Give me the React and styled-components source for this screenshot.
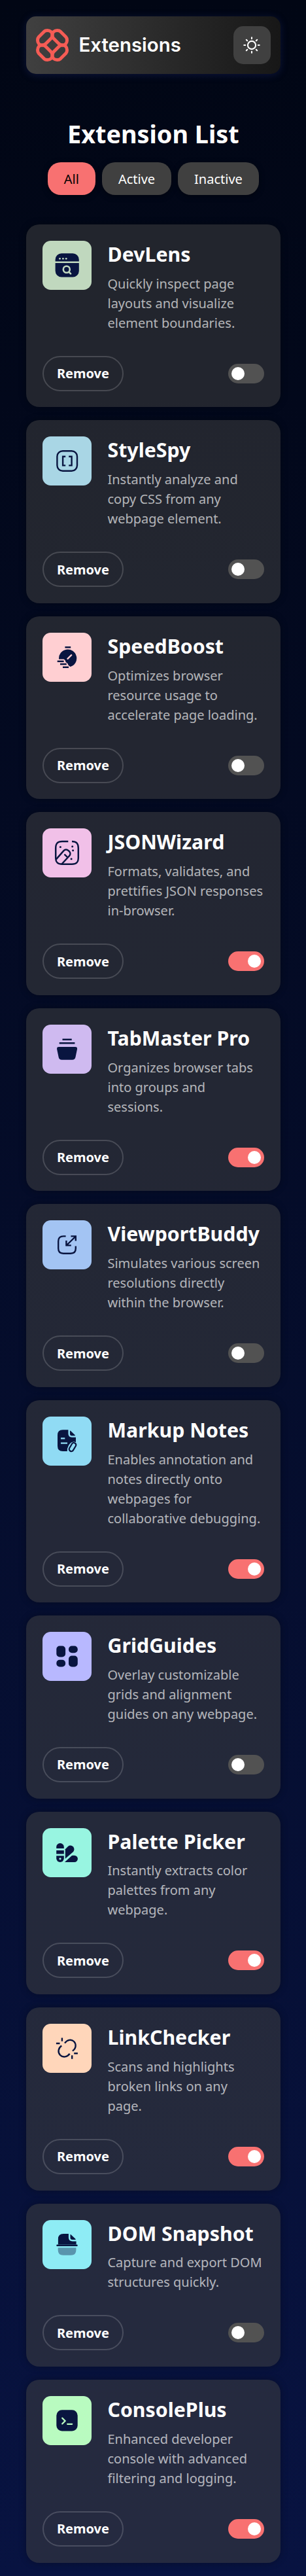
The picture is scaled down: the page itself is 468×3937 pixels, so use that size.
import React, { useState } from 'react';
import styled, { createGlobalStyle } from 'styled-components';

const NAVY = '#091540';

const GlobalStyle = createGlobalStyle`
  *, *::before, *::after { box-sizing: border-box; }
  body {
    margin: 0;
    background: linear-gradient(180deg, #010614 0%, #081341 100%);
    color: #fff;
    font-family: 'Noto Sans', sans-serif;
    font-size: 20px;
  }
  h1, h2, p { margin: 0; }
  button { font: inherit; color: inherit; cursor: pointer; }
  svg { display: block; }
`;

const Page = styled.div`
  width: 388.9px;
  margin: 0 0 0 39.9px;
  padding: 25px 0 20px;
`;

const Header = styled.header`
  display: flex;
  align-items: center;
  justify-content: space-between;
  height: 88px;
  padding: 15px;
  border-radius: 15px;
  background: linear-gradient(90deg, #404040, #171717);
  box-shadow: 0 2px 12px rgba(30, 40, 110, 0.4);
`;

const Brand = styled.div`
  display: flex;
  align-items: center;
  gap: 15.6px;
`;

const Wordmark = styled.span`
  font-family: Inter, sans-serif;
  font-size: 29.4px;
  font-weight: 600;
  line-height: 36px;
`;

const ThemeButton = styled.button`
  display: grid;
  place-items: center;
  width: 57px;
  height: 58px;
  padding: 0;
  border: 0;
  border-radius: 15px;
  background: #404040;
`;

const Toolbar = styled.section`
  display: flex;
  flex-direction: column;
  align-items: center;
  gap: 17px;
  margin: 66px 0 45px;
`;

const Title = styled.h1`
  font-size: 37.8px;
  line-height: 52px;
  font-weight: 700;
`;

const Filters = styled.div`
  display: flex;
  gap: 10px;
`;

const FilterButton = styled.button`
  height: 50px;
  padding: 0 25px;
  border: 0;
  border-radius: 20px;
  background: ${(p) => (p.$selected ? '#f87171' : '#404040')};
  color: ${(p) => (p.$selected ? '#000' : '#fff')};
  box-shadow: 0 2px 10px rgba(0, 0, 0, 0.4);
`;

const List = styled.main`
  display: flex;
  flex-direction: column;
  gap: 20px;
`;

const Card = styled.article`
  display: flex;
  flex-direction: column;
  gap: 35px;
  padding: 25px 25px 24.9px;
  border-radius: 20px;
  background: rgba(64, 64, 64, 0.53);
  box-shadow: 0 0 12px rgba(0, 0, 0, 0.3);
`;

const CardBody = styled.div`
  display: flex;
  align-items: flex-start;
  gap: 24.6px;
`;

const IconTile = styled.div`
  flex: none;
  width: 75px;
  height: 75px;
  border-radius: 12.5px;
  background: ${(p) => p.$color};
`;

const CardText = styled.div`
  flex: 1;
  min-width: 0;
`;

const CardTitle = styled.h2`
  font-size: 30.3px;
  line-height: 41px;
  font-weight: 700;
  white-space: nowrap;
`;

const Description = styled.p`
  margin-top: 9.6px;
  line-height: 30px;
  color: rgba(255, 255, 255, 0.67);
`;

const CardFooter = styled.div`
  display: flex;
  align-items: center;
  justify-content: space-between;
`;

const RemoveButton = styled.button`
  width: 124px;
  height: 54px;
  padding: 0;
  border: 2px solid rgba(255, 255, 255, 0.17);
  border-radius: 27px;
  background: transparent;
  font-weight: 700;
`;

const Switch = styled.button`
  display: flex;
  align-items: center;
  justify-content: ${(p) => (p.$on ? 'flex-end' : 'flex-start')};
  width: 55px;
  height: 30px;
  padding: 0 5px;
  border: 0;
  border-radius: 15px;
  background: ${(p) => (p.$on ? '#f87171' : '#525252')};
`;

const Knob = styled.span`
  width: 20px;
  height: 20px;
  border-radius: 50%;
  background: #fff;
`;

const PETAL =
  'M4.2 12.5L12.5 4.2C14 2.8 15.5 2.5 17.5 2.5C22 2.5 25 5.5 25 9.5C25 12 24.3 13.5 22.8 15L15 22.8C13.5 24.3 12 25 9.5 25C5.5 25 2.5 22 2.5 17.5C2.5 15.5 2.8 14 4.2 12.5Z';

const Logo = () => (
  <svg width="50" height="50" viewBox="0 0 50 50" fill="none" stroke="#f55c55" strokeWidth="5">
    {[0, 90, 180, 270].map((angle) => (
      <path key={angle} d={PETAL} transform={`rotate(${angle} 25 25)`} />
    ))}
  </svg>
);

const Sun = () => (
  <svg width="28" height="28" viewBox="-14 -14 28 28" fill="none" stroke="#fff" strokeWidth="2.1" strokeLinecap="round">
    <circle r="6.1" />
    {[0, 90, 180, 270].map((angle) => (
      <path key={angle} d="M0 -9.8V-11.7M6.8 -6.8L8.2 -8.2" transform={`rotate(${angle})`} />
    ))}
  </svg>
);

const glyphs = {
  lens: (bg) => (
    <>
      <rect x="19.6" y="19.3" width="36.2" height="36.2" rx="9.5" fill={NAVY} />
      <path d="M19 32.8H56.5" stroke={bg} strokeWidth="2.4" />
      <g fill={bg}>
        <circle cx="26.5" cy="27.3" r="1.4" />
        <circle cx="31.4" cy="27.3" r="1.4" />
        <circle cx="36.2" cy="27.3" r="1.4" />
      </g>
      <g fill="none" stroke={bg} strokeWidth="2.6" strokeLinecap="round">
        <circle cx="36.8" cy="43.8" r="5" />
        <path d="M40.8 48L43.1 50.3" />
      </g>
    </>
  ),
  brackets: () => (
    <g fill="none" stroke={NAVY} strokeWidth="2.4">
      <rect x="22.4" y="22.2" width="30.6" height="30.6" rx="8.5" />
      <path d="M35.2 30.8H31.1V44.4H35.2M40.2 30.8H44.6V44.4H40.2" />
    </g>
  ),
  stopwatch: (bg) => (
    <>
      <path d="M25.1 40.4A13.6 13.6 0 1 1 42.6 52.1C40.5 50.5 39.6 49.8 39 48.4C38.4 46.7 37.5 46 35.8 45.2C35 43 34.5 41 32.6 40.4Z" fill={NAVY} />
      <path d="M38.4 39.8L44.2 34.2" stroke={bg} strokeWidth="2.3" strokeLinecap="round" />
      <path d="M34.4 22.2H43.2M22.7 43.7H32.6M27 48.1H36.7M31 52.7H40" stroke={NAVY} strokeWidth="2.5" />
    </>
  ),
  wand: () => (
    <>
      <g fill="none" stroke={NAVY} strokeWidth="2.5">
        <path d="M39.3 19.9H30C23 19.9 20.2 23 20.2 30V44.8C20.2 52 23 54.8 30 54.8H45C52 54.8 54.8 52 54.8 44.8V30C54.8 23 52 19.9 45 19.9" />
        <path d="M20.8 47.4L32.5 34.2C34.4 32 37.4 31.9 39.4 33.8L40.9 35.2C42.8 37.1 42.9 40 41.1 42L29 55" />
        <path d="M34.2 40.4L37.4 43.4" strokeLinecap="round" />
      </g>
      <g fill={NAVY}>
        <circle cx="27.4" cy="28.4" r="1.5" />
        <circle cx="45.7" cy="27.7" r="1.5" />
        <circle cx="46.6" cy="33.7" r="1.5" />
        <circle cx="44.1" cy="46.7" r="1.5" />
      </g>
    </>
  ),
  tabs: () => (
    <>
      <path d="M30.5 22.7H44.7M25.7 28.2H49.4" stroke={NAVY} strokeWidth="2.4" />
      <path d="M25 34H50Q53.5 34 53 37.4L50.5 49.4Q49.5 53.7 45.5 53.7H29.5Q25.5 53.7 24.6 49.4L22.1 37.4Q21.6 34 25 34Z" fill={NAVY} />
    </>
  ),
  resize: () => (
    <path
      d="M35.6 24.4H32C26.5 24.4 24.2 26.7 24.2 32V43C24.2 48.5 26.5 50.7 32 50.7H43C48.5 50.7 50.8 48.5 50.8 43V39.6M37 38L50.3 25M43.4 24.4H50.8V31.6M36.4 31V38.4H43.8"
      fill="none"
      stroke={NAVY}
      strokeWidth="2.4"
    />
  ),
  notes: (bg) => (
    <>
      <path d="M39.4 20.3H31Q23 20.3 23 28.3V45Q23 53 31 53H37.8Q37.5 48.5 40 44Q43 38.8 47.5 38.4Q49.8 38.3 51 39.2V31.7H45Q39.4 31.7 39.4 26Z" fill={NAVY} />
      <path d="M42 21.4Q42.6 21.4 43.4 22.2L49.2 27.7Q50.2 28.7 50 29.3H44.6Q42 29.3 42 26.5Z" fill={NAVY} />
      <path d="M28 33.4H34.3M28 40.6H38" stroke={bg} strokeWidth="2.3" />
      <rect x="-3.3" y="-7" width="6.6" height="14" rx="3.1" transform="translate(46 46.6) rotate(31)" fill={bg} stroke={NAVY} strokeWidth="2.2" />
    </>
  ),
  grid: () => (
    <g fill={NAVY}>
      <rect x="21.3" y="21.6" width="13.8" height="16.8" rx="5" />
      <rect x="40" y="21.6" width="13.8" height="10.6" rx="5" />
      <rect x="21.3" y="42.8" width="13.8" height="10.6" rx="5" />
      <rect x="40" y="36.6" width="13.8" height="16.8" rx="5" />
    </g>
  ),
  palette: (bg) => (
    <>
      <rect x="21.2" y="23" width="11.6" height="29" rx="5.7" fill={NAVY} />
      <path d="M20.5 32.5H33.5M20.5 40.8H33.5" stroke={bg} strokeWidth="2.8" />
      <circle cx="27" cy="46.8" r="1.6" fill={bg} />
      <path d="M34.8 46.8V32.2L39 27.9A5.8 5.8 0 0 1 47.2 36Z" fill={NAVY} />
      <path d="M34 52L44.6 42.2Q45.1 41.7 46 41.7H48.8A5.15 5.15 0 0 1 48.8 52Z" fill={NAVY} />
    </>
  ),
  link: () => (
    <path
      d="M34 29.6C38 24 44.3 23.3 48 27C52 31 51.6 37.8 45.9 41.4M29.2 33.5C23.7 37.5 23.2 43.5 27 47.8C31.2 52 37.8 51.2 41.6 45.8M29.9 21.4V26.8M20.9 30H26.5M45.2 48.3V53.8M48.2 45.3H53.9"
      fill="none"
      stroke={NAVY}
      strokeWidth="2.4"
    />
  ),
  snapshot: () => (
    <g fill={NAVY}>
      <path d="M39.9 21H32Q23.9 21 23.9 29V37.5H51.6V32.4H46Q39.9 32.4 39.9 26.5Z" />
      <path d="M42.5 22H43.2L50.6 29V30H45.5Q42.5 30 42.5 27Z" />
      <rect x="21.3" y="37.4" width="32.4" height="2.5" rx="1" />
      <path d="M23.7 42.2H51.4V46Q51.4 53.8 43.4 53.8H31.7Q23.7 53.8 23.7 46Z" opacity="0.4" />
    </g>
  ),
  terminal: (bg) => (
    <>
      <rect x="21.3" y="21.2" width="32.4" height="32.4" rx="8.5" fill={NAVY} />
      <path d="M30.2 33.6L34.6 38L30.2 42.4M38.1 42.8H45.2" fill="none" stroke={bg} strokeWidth="2.2" strokeLinecap="round" />
    </>
  ),
};

const initialExtensions = [
  { name: 'DevLens', icon: 'lens', color: '#c0d8be', on: false, text: 'Quickly inspect page layouts and visualize element boundaries.' },
  { name: 'StyleSpy', icon: 'brackets', color: '#a9d6e5', on: false, text: 'Instantly analyze and copy CSS from any webpage element.' },
  { name: 'SpeedBoost', icon: 'stopwatch', color: '#ffcfd2', on: false, text: 'Optimizes browser resource usage to accelerate page loading.' },
  { name: 'JSONWizard', icon: 'wand', color: '#f1c0e8', on: true, text: 'Formats, validates, and prettifies JSON responses in-browser.' },
  { name: 'TabMaster Pro', icon: 'tabs', color: '#cfbaf0', on: true, text: 'Organizes browser tabs into groups and sessions.' },
  { name: 'ViewportBuddy', icon: 'resize', color: '#a3c4f3', on: false, text: 'Simulates various screen resolutions directly within the browser.' },
  { name: 'Markup Notes', icon: 'notes', color: '#90dbf4', on: true, text: 'Enables annotation and notes directly onto webpages for collaborative debugging.' },
  { name: 'GridGuides', icon: 'grid', color: '#b8b8ff', on: false, text: 'Overlay customizable grids and alignment guides on any webpage.' },
  { name: 'Palette Picker', icon: 'palette', color: '#98f5e1', on: true, text: 'Instantly extracts color palettes from any webpage.' },
  { name: 'LinkChecker', icon: 'link', color: '#ffd6ba', on: true, text: 'Scans and highlights broken links on any page.' },
  { name: 'DOM Snapshot', icon: 'snapshot', color: '#8eecf5', on: false, text: 'Capture and export DOM structures quickly.' },
  { name: 'ConsolePlus', icon: 'terminal', color: '#b9fbc0', on: true, text: 'Enhanced developer console with advanced filtering and logging.' },
];

const filters = ['All', 'Active', 'Inactive'];

export default function App() {
  const [extensions, setExtensions] = useState(initialExtensions);
  const [filter, setFilter] = useState('All');

  const toggle = (name) =>
    setExtensions((items) => items.map((item) => (item.name === name ? { ...item, on: !item.on } : item)));
  const remove = (name) => setExtensions((items) => items.filter((item) => item.name !== name));
  const visible = extensions.filter((item) => filter === 'All' || item.on === (filter === 'Active'));

  return (
    <>
      <GlobalStyle />
      <Page>
        <Header>
          <Brand>
            <Logo />
            <Wordmark>Extensions</Wordmark>
          </Brand>
          <ThemeButton aria-label="Toggle theme">
            <Sun />
          </ThemeButton>
        </Header>
        <Toolbar>
          <Title>Extension List</Title>
          <Filters>
            {filters.map((label) => (
              <FilterButton key={label} $selected={label === filter} onClick={() => setFilter(label)}>
                {label}
              </FilterButton>
            ))}
          </Filters>
        </Toolbar>
        <List>
          {visible.map(({ name, icon, color, on, text }) => (
            <Card key={name}>
              <CardBody>
                <IconTile $color={color}>
                  <svg width="75" height="75" viewBox="0 0 75 75" aria-hidden="true">
                    {glyphs[icon](color)}
                  </svg>
                </IconTile>
                <CardText>
                  <CardTitle>{name}</CardTitle>
                  <Description>{text}</Description>
                </CardText>
              </CardBody>
              <CardFooter>
                <RemoveButton onClick={() => remove(name)}>Remove</RemoveButton>
                <Switch $on={on} role="switch" aria-checked={on} aria-label={name} onClick={() => toggle(name)}>
                  <Knob />
                </Switch>
              </CardFooter>
            </Card>
          ))}
        </List>
      </Page>
    </>
  );
}
